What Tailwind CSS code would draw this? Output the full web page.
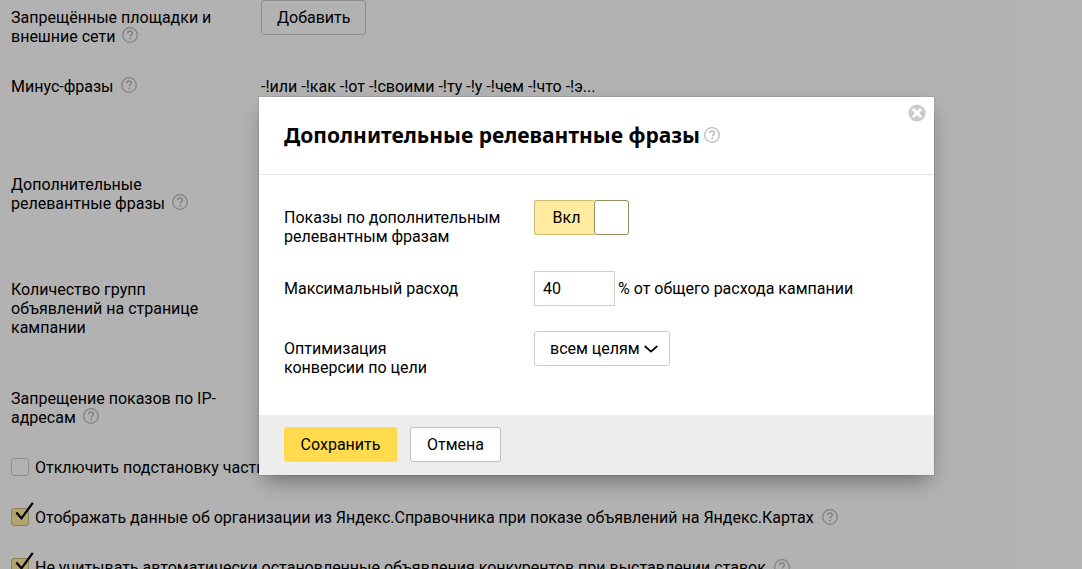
<!DOCTYPE html>
<html lang="ru">
<head>
<meta charset="utf-8">
<meta name="viewport" content="width=device-width, initial-scale=1">
<title>Дополнительные релевантные фразы</title>
<script src="https://cdn.jsdelivr.net/npm/@tailwindcss/browser@4"></script>
</head>
<body class="relative h-screen overflow-hidden bg-white font-[Roboto,sans-serif] text-[16px] leading-[19px] text-black">
<svg class="hidden" aria-hidden="true">
  <symbol id="help" viewBox="0 0 16 16">
    <circle cx="8" cy="8" r="7.3" fill="none" stroke="currentColor" stroke-width="1.3"/>
    <path d="M5.7 6.3C5.7 4.9 6.7 4.1 8 4.1s2.3.8 2.3 2c0 1.6-2.1 1.7-2.1 3.4" fill="none" stroke="currentColor" stroke-width="1.5"/>
    <circle cx="8.2" cy="11.6" r="1" fill="currentColor"/>
  </symbol>
  <symbol id="tick" viewBox="0 0 20 20">
    <path d="M1.3 10.5L6.5 16.3L17.8 .8" fill="none" stroke="#000" stroke-width="2.2"/>
  </symbol>
</svg>

<main class="px-[11px] pt-2">
  <div class="grid grid-cols-[250px_1fr]">
    <div class="h-[69px] w-[220px]">Запрещённые площадки и внешние сети <button type="button" aria-label="Справка" class="ml-[3px] size-4 align-[-1px] text-[#bbb]"><svg class="size-4"><use href="#help"/></svg></button></div>
    <div><button type="button" class="-mt-2 h-[35px] rounded-[3px] border border-[#ccc] px-[15px]">Добавить</button></div>
    <div class="h-[98px] w-[220px]">Минус-фразы <button type="button" aria-label="Справка" class="ml-[3px] size-4 align-[-1px] text-[#bbb]"><svg class="size-4"><use href="#help"/></svg></button></div>
    <div>-!или -!как -!от -!своими -!ту -!у -!чем -!что -!э...</div>
    <div class="col-span-2 h-[105px]">Дополнительные<br>релевантные фразы <button type="button" aria-label="Справка" class="ml-[3px] size-4 align-[-1px] text-[#bbb]"><svg class="size-4"><use href="#help"/></svg></button></div>
    <div class="col-span-2 h-[109px]">Количество групп<br>объявлений на странице<br>кампании</div>
    <div class="col-span-2 h-[68px]">Запрещение показов по IP-<br>адресам <button type="button" aria-label="Справка" class="ml-[3px] size-4 align-[-1px] text-[#bbb]"><svg class="size-4"><use href="#help"/></svg></button></div>
  </div>
  <div class="flex flex-col gap-[30px] whitespace-nowrap">
    <div class="flex h-5 items-center">
      <span class="relative mr-1.5 size-[18px]"><input id="c1" type="checkbox" class="peer block size-[18px] appearance-none rounded-[3px] border border-[#ccc] checked:border-[#c9ba80] checked:bg-[#ffeba0]"><svg class="pointer-events-none absolute -top-1.5 left-1 hidden size-5 peer-checked:block"><use href="#tick"/></svg></span>
      <label for="c1">Отключить подстановку части текста в заголовок</label>
    </div>
    <div class="flex h-5 items-center">
      <span class="relative mr-1.5 size-[18px]"><input id="c2" type="checkbox" checked class="peer block size-[18px] appearance-none rounded-[3px] border border-[#ccc] checked:border-[#c9ba80] checked:bg-[#ffeba0]"><svg class="pointer-events-none absolute -top-1.5 left-1 hidden size-5 peer-checked:block"><use href="#tick"/></svg></span>
      <label for="c2">Отображать данные об организации из Яндекс.Справочника при показе объявлений на Яндекс.Картах</label>
      <button type="button" aria-label="Справка" class="ml-2 size-4 text-[#bbb]"><svg class="size-4"><use href="#help"/></svg></button>
    </div>
    <div class="flex h-5 items-center">
      <span class="relative mr-1.5 size-[18px]"><input id="c3" type="checkbox" checked class="peer block size-[18px] appearance-none rounded-[3px] border border-[#ccc] checked:border-[#c9ba80] checked:bg-[#ffeba0]"><svg class="pointer-events-none absolute -top-1.5 left-1 hidden size-5 peer-checked:block"><use href="#tick"/></svg></span>
      <label for="c3">Не учитывать автоматически остановленные объявления конкурентов при выставлении ставок</label>
      <button type="button" aria-label="Справка" class="ml-2 size-4 text-[#bbb]"><svg class="size-4"><use href="#help"/></svg></button>
    </div>
  </div>
</main>

<div class="absolute inset-0 flex items-start bg-black/30 pt-[97px] pr-[148px] pl-[259px]">
  <section role="dialog" aria-labelledby="title" class="relative min-w-0 flex-1 bg-white shadow-[0_10px_20px_-5px_rgba(0,0,0,0.4),0_0_0_1px_rgba(0,0,0,0.07)]">
    <button type="button" aria-label="Закрыть" class="absolute top-[7px] right-2 size-[18px]">
      <svg viewBox="0 0 18 18" class="size-[18px]"><circle cx="9" cy="9" r="8.6" fill="#ccc"/><path d="M5 5l8 8M13 5l-8 8" stroke="#fff" stroke-width="2.8"/></svg>
    </button>
    <header class="flex h-[78px] items-center border-b border-[#e5e5e5] px-[25px] pb-px">
      <h2 id="title" class="font-['Noto_Sans',sans-serif] text-[21px] leading-[26px] font-bold">Дополнительные релевантные фразы</h2>
      <button type="button" aria-label="Справка" class="ml-1 size-4 text-[#bbb]"><svg class="size-4"><use href="#help"/></svg></button>
    </header>
    <div class="grid grid-cols-[250px_1fr] gap-y-[25px] px-[25px] pt-[25px] pb-[38px]">
      <div id="l1" class="pt-2">Показы по дополнительным<br>релевантным фразам</div>
      <button type="button" role="switch" aria-checked="true" aria-labelledby="l1" class="flex h-[35px] w-[95px] rounded-[3px] bg-[#ffeba0]">
        <span class="flex h-full flex-1 items-center justify-center rounded-l-[3px] border border-r-0 border-[#ccba75] pl-1">Вкл</span>
        <span class="h-full w-[35px] rounded-[3px] border border-[#998d60] bg-white"></span>
      </button>
      <label for="max" class="pt-2">Максимальный расход</label>
      <div class="flex items-center gap-[3px]"><input id="max" type="text" value="40" class="h-[35px] w-[81px] border border-[#ccc] px-2"><span>% от общего расхода кампании</span></div>
      <label for="goal" class="pt-2">Оптимизация<br>конверсии по цели</label>
      <div class="relative h-[35px] w-[136px]">
        <select id="goal" class="h-[35px] w-full appearance-none rounded-[3px] border border-[#ccc] bg-white pl-[15px]"><option>всем целям</option></select>
        <svg viewBox="0 0 14 8" class="pointer-events-none absolute top-[14px] right-3 h-2 w-3.5" fill="none" stroke="#000" stroke-width="1.8"><path d="M.7 1L7 6.6L13.3 1"/></svg>
      </div>
    </div>
    <footer class="flex h-[60px] items-start gap-[13px] bg-[#ededed] px-[25px] pt-3">
      <button type="button" class="h-[35px] min-w-[113px] rounded-[3px] bg-[#ffdb4d] px-4">Сохранить</button>
      <button type="button" class="h-[35px] min-w-[91px] rounded-[3px] border border-[#c0c0c0] bg-white px-[15px]">Отмена</button>
    </footer>
  </section>
</div>
</body>
</html>
